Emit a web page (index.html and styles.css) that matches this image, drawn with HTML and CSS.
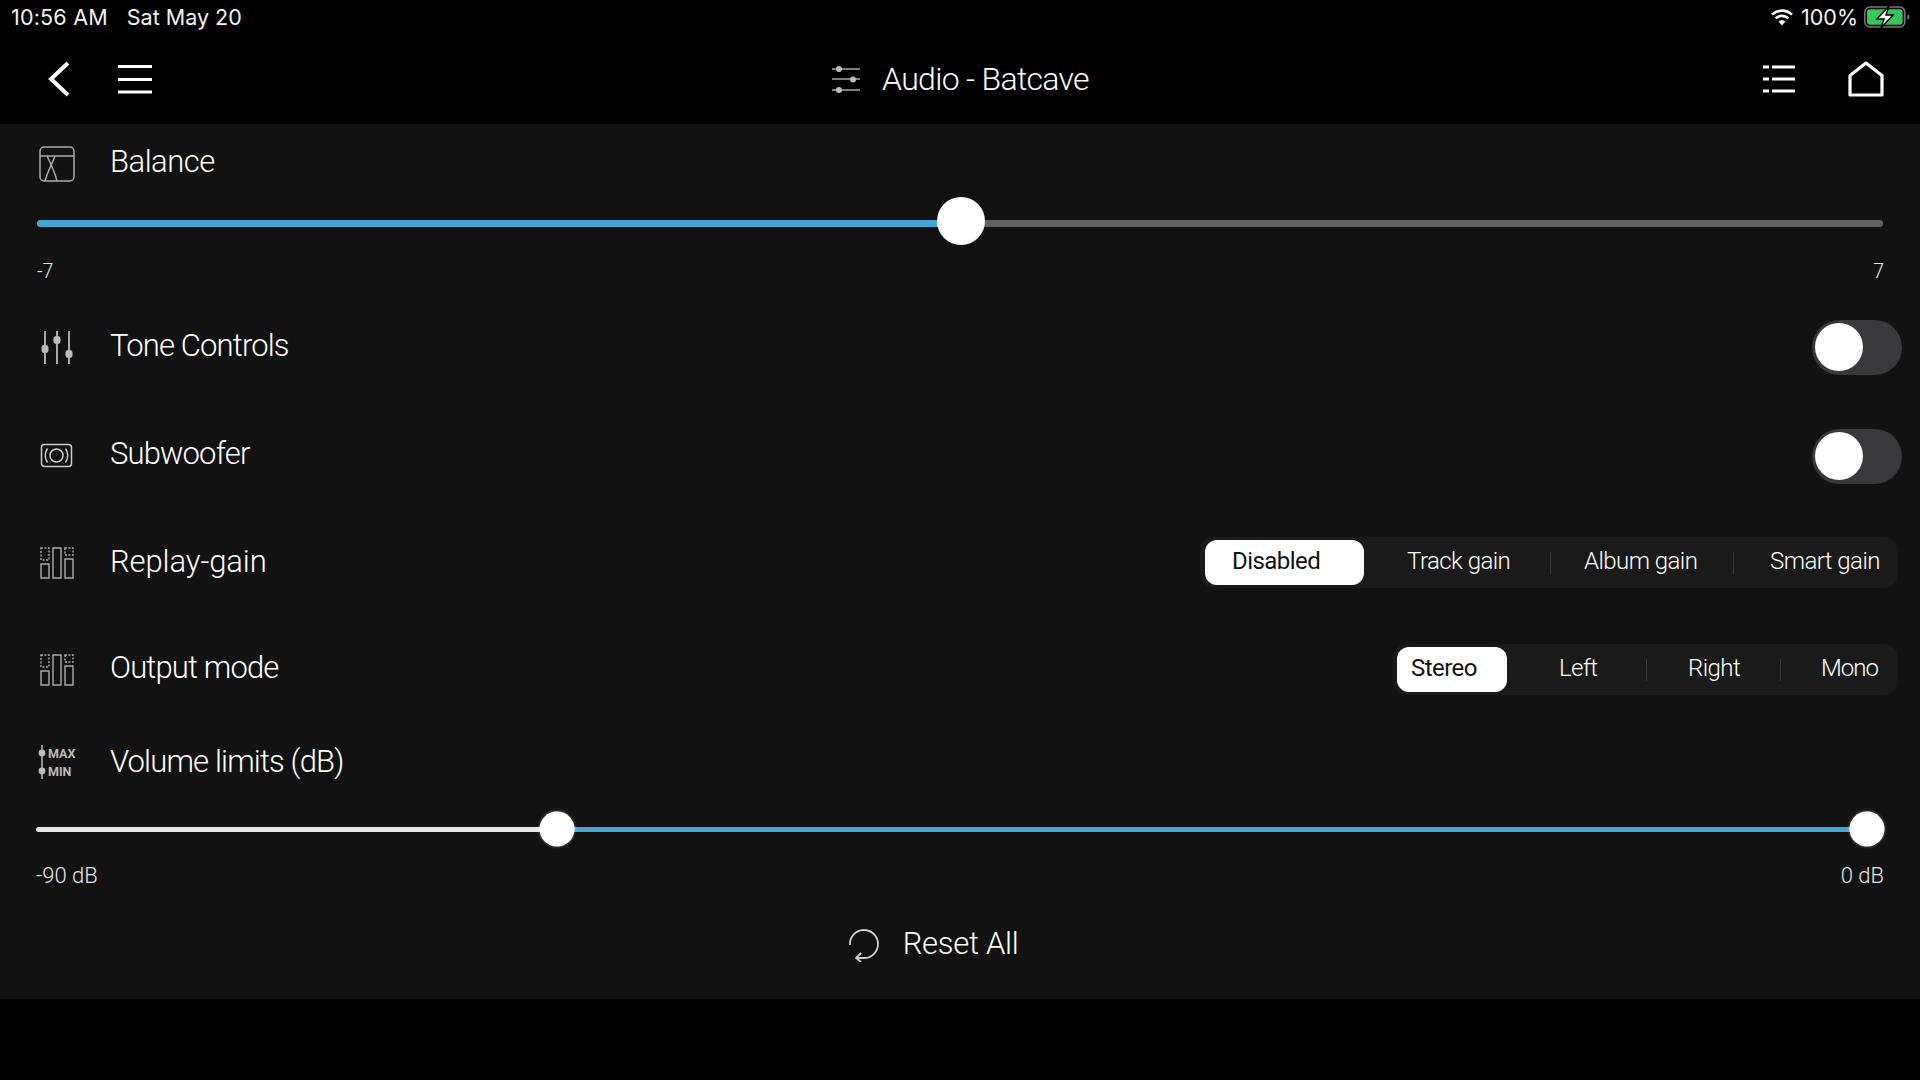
FILE: index.html
```html
<!DOCTYPE html>
<html lang="en">
<head>
<meta charset="utf-8">
<title>Audio - Batcave</title>
<link rel="stylesheet" href="styles.css">
</head>
<body>
<div class="app">
  <div class="status">
    <div class="status-left"><span class="time">10:56 AM</span><span>Sat May 20</span></div>
    <div class="status-right">
      <svg class="wifi" width="24" height="18" viewBox="0 0 24 18"><path d="M12 17.500 8.600 13.600a5 5 0 0 1 6.800 0Z" fill="#fff"/><path d="M5.600 10.400a9.400 9.400 0 0 1 12.800 0M2 6.600a14.500 14.500 0 0 1 20 0" fill="none" stroke="#fff" stroke-width="2.600"/></svg>
      <span class="pct">100%</span>
      <svg class="batt" width="46" height="22" viewBox="0 0 46 22"><rect x=".8" y="1" width="40" height="20" rx="5" fill="none" stroke="#777" stroke-width="1.500"/><rect x="3" y="3.200" width="35.600" height="15.600" rx="3" fill="#34c759"/><path d="M43.500 8v6c1.200-.4 2-1.600 2-3s-.8-2.600-2-3Z" fill="#777"/><path d="M25 0 13 13h7l-3 9 12-13h-7Z" fill="#fff" stroke="#000" stroke-width="1.500"/></svg>
    </div>
  </div>

  <header class="topbar">
    <div class="top-left">
      <svg width="26" height="38" viewBox="0 0 26 38"><path d="M22 3 5 19l17 16" fill="none" stroke="#fff" stroke-width="4"/></svg>
      <svg class="menu-icon" width="34" height="30" viewBox="0 0 34 30"><path d="M0 2.500h34M0 15.500h34M0 28h34" stroke="#fff" stroke-width="3.200"/></svg>
    </div>
    <div class="title">
      <svg width="30" height="28" viewBox="0 0 30 28"><path d="M1 4h28M1 14h28M1 25h28" stroke="#aaa" stroke-width="1.500"/><circle cx="8" cy="4" r="3" fill="#bbb"/><circle cx="22" cy="14.500" r="3" fill="#bbb"/><circle cx="8" cy="25" r="3" fill="#bbb"/></svg>
      <span>Audio - Batcave</span>
    </div>
    <div class="top-right">
      <svg width="32" height="30" viewBox="0 0 32 30"><path d="M0 3h6M0 15h6M0 27h6" stroke="#fff" stroke-width="3.200"/><path d="M9 3h23M9 15h23M9 27h23" stroke="#fff" stroke-width="3.200"/></svg>
      <svg class="home-icon" width="36" height="36" viewBox="0 0 36 36"><path d="M2 34V14.500L18 2l16 12.500V34Z" fill="none" stroke="#fff" stroke-width="3.200" stroke-linejoin="round"/></svg>
    </div>
  </header>

  <main class="panel">
    <div class="row row-balance">
      <svg class="icon icon-down" width="38" height="38" viewBox="0 0 38 38"><rect x="2" y="2" width="34" height="34" rx="4" fill="none" stroke="#aaa" stroke-width="1.500"/><path d="M2 11h34M9 11c4 8 8 17 10 25M17 11c-3 8-8 17-10 25" fill="none" stroke="#aaa" stroke-width="1.500"/></svg>
      <span class="label label-balance">Balance</span>
    </div>
    <div class="slider slider-balance">
      <div class="track track-balance">
        <div class="fill fill-blue" style="left:0;width:50%"></div>
        <div class="thumb thumb-big" style="left:50%"></div>
      </div>
    </div>
    <div class="scale scale-balance"><span>-7</span><span>7</span></div>

    <div class="row row-tone">
      <svg class="icon icon-down" width="38" height="36" viewBox="0 0 38 36"><path d="M7 1v33M19 1v33M31 1v33" stroke="#bbb" stroke-width="1.800"/><rect x="3.500" y="15" width="7" height="8" rx="3" fill="#bbb"/><rect x="15.500" y="6" width="7" height="8" rx="3" fill="#bbb"/><rect x="27.500" y="20" width="7" height="8" rx="3" fill="#bbb"/></svg>
      <span class="label">Tone Controls</span>
      <div class="toggle"><div class="knob"></div></div>
    </div>

    <div class="row row-sub">
      <svg class="icon icon-down" width="38" height="26" viewBox="0 0 38 26"><rect x="3.500" y="1.500" width="30" height="22" rx="3" fill="none" stroke="#ccc" stroke-width="1.500"/><circle cx="18.500" cy="12.500" r="6.500" fill="none" stroke="#ccc" stroke-width="1.500"/><path d="M9.500 5.500c-3 4-3 10 0 14M27.500 5.500c3 4 3 10 0 14" fill="none" stroke="#ccc" stroke-width="1.500"/></svg>
      <span class="label">Subwoofer</span>
      <div class="toggle"><div class="knob"></div></div>
    </div>

    <div class="row row-replay">
      <svg class="icon" width="38" height="32" viewBox="0 0 38 32"><g fill="none" stroke="#aaa" stroke-width="1.400"><path d="M3 1h8v12H3Z" stroke-dasharray="2 1.500"/><path d="M27 1h8v7h-8Z" stroke-dasharray="2 1.500"/><path d="M3 17h8v14H3ZM15 1h8v30h-8ZM27 12h8v19h-8Z"/></g></svg>
      <span class="label label-wide">Replay-gain</span>
      <div class="seg seg-replay">
        <span class="seg-item on">Disabled</span><span class="seg-item">Track gain</span><span class="seg-item">Album gain</span><span class="seg-item">Smart gain</span>
      </div>
    </div>

    <div class="row row-output">
      <svg class="icon icon-down" width="38" height="32" viewBox="0 0 38 32"><g fill="none" stroke="#aaa" stroke-width="1.400"><path d="M3 1h8v12H3Z" stroke-dasharray="2 1.500"/><path d="M27 1h8v7h-8Z" stroke-dasharray="2 1.500"/><path d="M3 17h8v14H3ZM15 1h8v30h-8ZM27 12h8v19h-8Z"/></g></svg>
      <span class="label">Output mode</span>
      <div class="seg seg-output">
        <span class="seg-item on">Stereo</span><span class="seg-item">Left</span><span class="seg-item">Right</span><span class="seg-item">Mono</span>
      </div>
    </div>

    <div class="row row-volume">
      <svg class="icon" width="38" height="38" viewBox="0 0 38 38"><path d="M4 2v34" stroke="#bbb" stroke-width="1.500"/><circle cx="4" cy="10" r="3.400" fill="#bbb"/><circle cx="4" cy="28" r="3.400" fill="#bbb"/><text x="10" y="14.500" class="tiny">MAX</text><text x="10" y="32.500" class="tiny">MIN</text></svg>
      <span class="label label-volume">Volume limits (dB)</span>
    </div>
    <div class="slider slider-volume">
      <div class="track track-volume">
        <div class="fill fill-white" style="left:0;width:28.400%"></div>
        <div class="fill fill-blue" style="left:28.400%;width:71.600%"></div>
        <div class="thumb thumb-small" style="left:28.400%"></div>
        <div class="thumb thumb-small" style="left:100%"></div>
      </div>
    </div>
    <div class="scale scale-volume"><span>-90 dB</span><span>0 dB</span></div>

    <div class="reset">
      <svg width="32" height="36" viewBox="0 0 32 36"><path d="M2 19A14 14 0 1 1 16 32H8M13 27l-5 5 5 4" fill="none" stroke="#ccc" stroke-width="1.800"/></svg>
      <span>Reset All</span>
    </div>
  </main>
</div>
</body>
</html>
```

FILE: styles.css
```css
* { box-sizing: border-box; }
html, body { margin: 0; height: 100%; background: #000; }
body { font-family: Roboto, "Liberation Sans", sans-serif; color: #fff; overflow: hidden; }
svg { display: block; flex: none; }
.app { width: 1920px; height: 1080px; display: flex; flex-direction: column; background: #000; }

.status { height: 34px; flex: none; display: flex; justify-content: space-between; align-items: center; padding: 0 10px 0 11px; font-family: Inter, sans-serif; font-size: 21.500px; color: #f2f2f2; }
.status-left { display: flex; gap: 19px; }
.time { letter-spacing: .2px; }
.status-right { display: flex; align-items: center; }
.pct { margin: 0 6px 0 8px; }
.wifi { margin-right: -1px; }

.topbar { height: 90px; flex: none; display: grid; grid-template-columns: 1fr auto 1fr; align-items: center; padding: 0 36px 0 46px; }
.top-left { display: flex; align-items: center; }
.menu-icon { margin-left: 46px; }
.title { display: flex; align-items: center; gap: 21px; font-size: 32px; font-weight: 350; letter-spacing: -.7px; margin-right: 10px; padding-bottom: 1px; }
.top-right { display: flex; justify-content: flex-end; align-items: center; gap: 53px; }

.panel { height: 875px; flex: none; background: #121212; display: flex; flex-direction: column; }
.row { display: flex; align-items: center; padding: 0 22px 0 38px; flex: none; }
.row .icon { margin-right: 34px; }
.row .icon-down { margin-top: 2px; }
.label { font-size: 31px; font-weight: 350; letter-spacing: -.85px; flex: 1; padding-bottom: 3px; }
.label-balance { letter-spacing: -.5px; }
.label-wide { letter-spacing: -.1px; }
.label-volume { padding-bottom: 1px; }
.row-balance { height: 78px; }
.row-tone { height: 109px; }
.row-sub { height: 108px; }
.row-replay { height: 107px; }
.row-output { height: 106px; }
.row-volume { height: 80px; }

.slider { flex: none; display: flex; align-items: center; }
.slider-balance { height: 40px; padding: 2px 37px 0; }
.slider-volume { height: 54px; padding: 0 54px 0 36px; }
.track { position: relative; flex: 1; background: #626262; border-radius: 4px; }
.track-balance { height: 7px; }
.track-volume { height: 5px; background: transparent; }
.fill { position: absolute; top: 0; bottom: 0; border-radius: 4px; }
.fill-blue { background: #47a5d3; }
.fill-white { background: #e8e8e8; }
.thumb { position: absolute; top: 50%; border-radius: 50%; background: #fff; transform: translate(-50%, -50%); }
.thumb-big { width: 48px; height: 48px; margin-top: -2px; margin-left: 1px; }
.thumb-small { width: 35px; height: 35px; margin-left: 1px; box-shadow: 0 0 3px rgba(255,255,255,.5); }

.scale { flex: none; display: flex; justify-content: space-between; align-items: center; color: #e4e4e4; }
.scale-balance { height: 50px; padding: 9px 36px 0 37px; font-size: 19.500px; font-weight: 350; }
.scale-volume { height: 38px; padding: 0 36px; font-size: 22px; font-weight: 300; }

.toggle { width: 90px; height: 55px; margin: 2px -4px 0 0; padding: 3px; border-radius: 28px; background: #39393b; }
.knob { width: 48px; height: 48px; border-radius: 50%; background: #fff; }

.seg { display: flex; align-items: center; height: 51px; border-radius: 14px; background: #1a1a1a; font-size: 24px; font-weight: 350; letter-spacing: -.55px; }
.seg-item { height: 45px; display: flex; align-items: center; padding-bottom: 3px; position: relative; }
.seg-item + .seg-item::before { content: ""; position: absolute; left: -1px; top: 12px; height: 22px; width: 1px; background: #3a3a3a; }
.seg-item:nth-child(2)::before { display: none; }
.seg-item.on { background: #fff; color: #111; border-radius: 12px; font-weight: 400; }

.seg-replay { padding: 0 3px 0 5px; }
.seg-replay .seg-item:nth-child(1) { width: 159px; padding-left: 27px; }
.seg-replay .seg-item:nth-child(2) { width: 187px; padding-left: 43px; }
.seg-replay .seg-item:nth-child(3) { width: 183px; padding-left: 33px; }
.seg-replay .seg-item:nth-child(4) { width: 161px; padding-left: 36px; }

.seg-output { padding: 0 3px 0 4px; }
.seg-output .seg-item:nth-child(1) { width: 110px; padding-left: 14px; }
.seg-output .seg-item:nth-child(2) { width: 140px; padding-left: 52px; }
.seg-output .seg-item:nth-child(3) { width: 134px; padding-left: 41px; }
.seg-output .seg-item:nth-child(4) { width: 114px; padding-left: 40px; letter-spacing: -1px; }

.reset { flex: 1; display: flex; align-items: center; justify-content: center; gap: 23px; padding: 0 54px 6px 0; font-size: 31px; font-weight: 350; letter-spacing: -.3px; }
.tiny { font-family: Roboto, sans-serif; font-size: 12.500px; font-weight: 700; fill: #bbb; }
```
